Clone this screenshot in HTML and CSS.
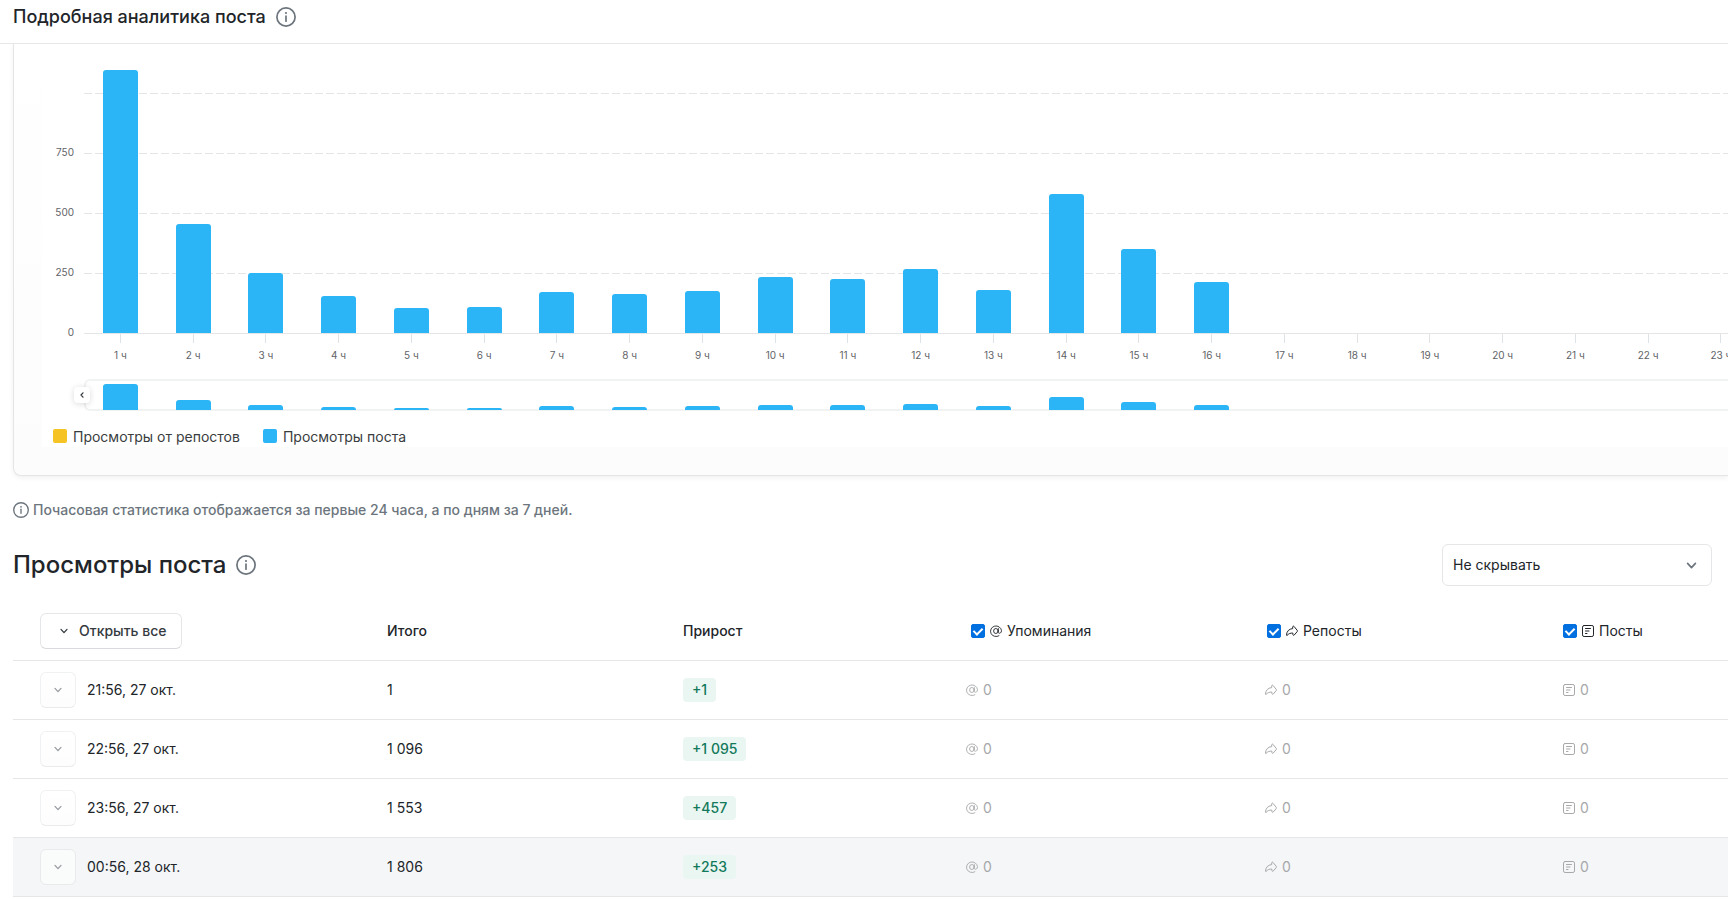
FILE: index.html
```html
<!DOCTYPE html>
<html lang="ru">
<head>
<meta charset="utf-8">
<title>Подробная аналитика поста</title>
<link rel="stylesheet" href="styles.css">
</head>
<body>
<svg class="sprite" aria-hidden="true">
  <symbol id="info" viewBox="0 0 20 20"><circle cx="10" cy="10" r="9.100" fill="none" stroke="currentColor" stroke-width="1.700"/><path d="M10 9v5.200" stroke="currentColor" stroke-width="1.700" stroke-linecap="round"/><circle cx="10" cy="6" r="1.100" fill="currentColor"/></symbol>
  <symbol id="down" viewBox="0 0 10 10"><path d="M2 3.400 5 6.600 8 3.400" fill="none" stroke="currentColor" stroke-width="1.300" stroke-linecap="round" stroke-linejoin="round"/></symbol>
  <symbol id="at" viewBox="0 0 12 12"><g fill="none" stroke="currentColor" stroke-width=".9" stroke-linecap="round"><ellipse cx="5.900" cy="6" rx="2.300" ry="2.500"/><path d="M8.400 3.600 8.100 7c0 2 3.400 1.700 3.400-1.300A5.500 5.300 0 1 0 8.900 10.800"/></g></symbol>
  <symbol id="share" viewBox="0 0 12 12"><path d="M6.700 1.900c0-.7.800-1 1.300-.5l3.200 3.900c.4.500.4.900 0 1.300L8.200 10.100c-.5.500-1.300.2-1.300-.5V8.100C4.600 7.900 2.600 8.600 1.100 10.400c-.3.300-.6.100-.6-.3C.6 6.500 3 3.800 6.700 3.600z" fill="none" stroke="currentColor" stroke-linejoin="round"/></symbol>
  <symbol id="post" viewBox="0 0 12 12"><g fill="none" stroke="currentColor" stroke-linecap="round"><rect x=".5" y=".5" width="11" height="11" rx="1.600"/><path d="M3.500 3.500h5M3.500 6h3.500M3.500 8.500h1.500"/></g></symbol>
</svg>

<header class="topbar">
  <h1 class="topbar-title">Подробная аналитика поста</h1>
  <svg class="icon-info"><use href="#info"/></svg>
</header>

<main class="page">
  <section class="card">
    <div class="chart">
      <div class="y-axis"><span></span><span>750</span><span>500</span><span>250</span><span>0</span></div>
      <div class="plot">
        <div class="bars" id="bars"></div>
        <div class="labels" id="labels"></div>
        <div class="overview">
          <div class="mini" id="mini"></div>
          <button class="handle" type="button" aria-label="Назад"><svg viewBox="0 0 10 10"><path d="M6 2.800 4 5l2 2.200" fill="none" stroke="currentColor" stroke-width="1.200" stroke-linecap="round" stroke-linejoin="round"/></svg></button>
        </div>
      </div>
    </div>
    <ul class="legend">
      <li><i class="swatch swatch-reposts"></i>Просмотры от репостов</li>
      <li><i class="swatch swatch-views"></i>Просмотры поста</li>
    </ul>
  </section>

  <p class="note"><svg class="icon-note"><use href="#info"/></svg>Почасовая статистика отображается за первые 24 часа, а по дням за 7 дней.</p>

  <section class="section-head">
    <h2 class="section-title">Просмотры поста</h2>
    <svg class="icon-info"><use href="#info"/></svg>
    <div class="select-wrap">
      <select class="select" aria-label="Скрытие строк"><option>Не скрывать</option></select>
      <svg class="select-arrow"><use href="#down"/></svg>
    </div>
  </section>

  <table class="table">
    <colgroup><col class="col-date"><col class="col-total"><col class="col-growth"><col><col><col></colgroup>
    <thead>
      <tr>
        <th class="date"><button class="open-all" type="button"><svg class="chevron"><use href="#down"/></svg>Открыть все</button></th>
        <th>Итого</th>
        <th>Прирост</th>
        <th><label class="filter"><input type="checkbox" checked><svg class="glyph"><use href="#at"/></svg>Упоминания</label></th>
        <th><label class="filter"><input type="checkbox" checked><svg class="glyph"><use href="#share"/></svg>Репосты</label></th>
        <th><label class="filter"><input type="checkbox" checked><svg class="glyph"><use href="#post"/></svg>Посты</label></th>
      </tr>
    </thead>
    <tbody id="rows"></tbody>
  </table>
</main>
<script src="app.js"></script>
</body>
</html>
```
FILE: styles.css
```css
* { box-sizing: border-box; }
body { margin: 0; background: #fff; color: #212529; font: 14px/20px Inter, "Noto Sans", sans-serif; overflow: hidden; }
h1, h2, p, ul { margin: 0; padding: 0; }
button, select { font: inherit; }
.sprite { position: absolute; width: 0; height: 0; }
.topbar { display: flex; align-items: center; gap: 10px; height: 44px; padding: 0 13px 10px; border-bottom: 1px solid #e7e7e8; }
.topbar-title { font-size: 18px; line-height: 24px; font-weight: 500; }
.icon-info { width: 20px; height: 20px; color: #6c757d; }
.page { padding-left: 13px; overflow: hidden; }

.card { border: 1px solid #e4e5e6; border-width: 0 0 1px 1px; border-radius: 0 0 0 8px; padding: 0 0 28px 28px; background: linear-gradient(#fff, #fcfcfc); box-shadow: 0 2px 5px rgba(0, 0, 0, .06); overflow: hidden; }
.chart { display: flex; width: 100%; min-width: 1788px; padding-top: 26px; background: #fff; }
.y-axis { width: 42px; flex: none; padding: 17px 10px 0 0; text-align: right; font-size: 10px; line-height: 10px; color: #5f6367; }
.y-axis span { display: block; height: 60px; }
.y-axis span:last-child { height: 10px; }
.plot { flex: 1; }
.bars, .labels, .mini { display: grid; grid-template-columns: repeat(24, 1fr); justify-items: center; }
.bars { height: 264px; align-items: end; border-bottom: 1px solid #e4e5e7; background: repeating-linear-gradient(90deg, transparent 0 8px, #fff 8px 11px), repeating-linear-gradient(0deg, transparent 0 59px, #e4e5e7 59px 60px); }
.bar { width: 35px; border-radius: 3px 3px 0 0; background: #2cb5f6; }
.labels { font-size: 10px; line-height: 12px; color: #5f6367; }
.labels span { display: flex; flex-direction: column; align-items: center; gap: 6px; }
.labels span::before { content: ""; width: 1px; height: 9px; background: #e0e3e6; }
.overview { position: relative; margin-top: 18px; height: 32px; border-radius: 6px; box-shadow: inset 0 0 0 2px #f1f2f2; }
.mini { height: 31px; align-items: end; }
.handle { position: absolute; left: -10px; top: 8px; width: 16px; height: 16px; padding: 3px; border: 0; border-radius: 4px; background: #fff; color: #343a40; box-shadow: 0 1px 6px rgba(0, 0, 0, .15); }
.handle svg { display: block; width: 10px; height: 10px; }
.legend { display: flex; gap: 23px; padding: 16px 11px 0; background: #fff; list-style: none; color: #3a3d40; }
.legend li { display: flex; align-items: center; gap: 6px; }
.swatch { width: 14px; height: 14px; border-radius: 2px; margin-bottom: 2px; }
.swatch-reposts { background: #f5c324; }
.swatch-views { background: #2cb5f6; }

.note { display: flex; align-items: center; gap: 4px; margin-top: 24px; color: #6c757d; font-weight: 500; }
.icon-note { width: 16px; height: 16px; }
.section-head { display: flex; align-items: center; gap: 10px; margin: 24px 16px 16px 0; }
.section-title { font-size: 24px; line-height: 32px; font-weight: 500; }
.select-wrap { position: relative; width: 270px; margin-left: auto; }
.select { display: block; width: 100%; height: 42px; padding: 0 10px; border: 1px solid #e4e6e8; border-radius: 6px; background: #fff; color: #212529; appearance: none; }
.select-arrow { position: absolute; right: 14px; top: 15px; width: 13px; height: 13px; color: #6c757d; pointer-events: none; }

.table { width: 100%; min-width: 1838px; table-layout: fixed; border-collapse: collapse; }
.col-date { width: 366px; }
.col-total { width: 296px; }
.col-growth { width: 288px; }
.table th, .table td { height: 59px; padding: 0 8px; border-bottom: 1px solid #e4e6e8; text-align: left; font-weight: 400; }
.table th { height: 58px; font-weight: 500; }
.table .date { padding-left: 27px; }
.open-all { display: flex; align-items: center; gap: 10px; height: 36px; padding: 0 14px 0 18px; border: 1px solid #e4e6e8; border-bottom-color: #d8dadd; border-radius: 6px; background: #fff; color: #343a40; }
.chevron { width: 10px; height: 10px; }
.filter { display: flex; align-items: center; gap: 5px; font-weight: 400; }
.filter input { appearance: none; display: grid; justify-items: center; width: 14px; height: 14px; margin: 0; border: 1px solid #006fe0; border-radius: 2px; }
.filter input:checked { background: #006fe0; }
.filter input:checked::after { content: ""; width: 5px; height: 8px; margin-top: 1px; border: solid #fff; border-width: 0 2px 2px 0; transform: rotate(45deg); }
.glyph { width: 12px; height: 12px; }
.day { display: flex; align-items: center; gap: 11px; }
.expand { display: grid; place-items: center; width: 36px; height: 36px; padding: 0; border: 1px solid #f0f1f2; border-bottom-color: #e9eaec; border-radius: 6px; background: linear-gradient(#fff, #fdfdfd); color: #989da2; }
.badge { display: inline-block; padding: 2px 9px; border-radius: 4px; background: #eaf6f2; color: #13795b; font-weight: 500; }
.count { display: flex; align-items: center; gap: 5px; color: #a6a8aa; }
.table .mentions { padding-left: 3px; }
.table .reposts { padding-left: 6px; }
.filter input:checked::after { height: 7px; width: 4px; }
.active { background: #f5f6f8; }
.active .expand { background: #fafbfb; border-color: #e8eaec; }
```
FILE: app.js
```js
const views = [1095, 454, 250, 156, 104, 108, 172, 164, 175, 234, 225, 267, 180, 579, 350, 213, 0, 0, 0, 0, 0, 0, 0, 0];
const column = (height) => `<div class="bar" style="height:${height}px"></div>`;

document.getElementById("bars").innerHTML = views.map((v) => column(Math.round(v * 0.24))).join("");
document.getElementById("mini").innerHTML = views.map((v) => column(Math.floor(v * 0.0238))).join("");
document.getElementById("labels").innerHTML = views.map((v, i) => `<span>${i + 1} ч</span>`).join("");

const rows = [
  ["21:56, 27 окт.", "1", "+1"],
  ["22:56, 27 окт.", "1 096", "+1 095"],
  ["23:56, 27 окт.", "1 553", "+457"],
  ["00:56, 28 окт.", "1 806", "+253"],
];
const count = (icon, cls) => `<td class="${cls}"><span class="count"><svg class="glyph"><use href="#${icon}"/></svg>0</span></td>`;

document.getElementById("rows").innerHTML = rows.map(([date, total, growth], i) => `
  <tr class="${i === 3 ? "active" : ""}">
    <td class="date"><div class="day"><button class="expand" type="button" aria-label="Раскрыть"><svg class="chevron"><use href="#down"/></svg></button>${date}</div></td>
    <td>${total}</td>
    <td><span class="badge">${growth}</span></td>
    ${count("at", "mentions")}${count("share", "reposts")}${count("post", "posts")}
  </tr>`).join("");
```
